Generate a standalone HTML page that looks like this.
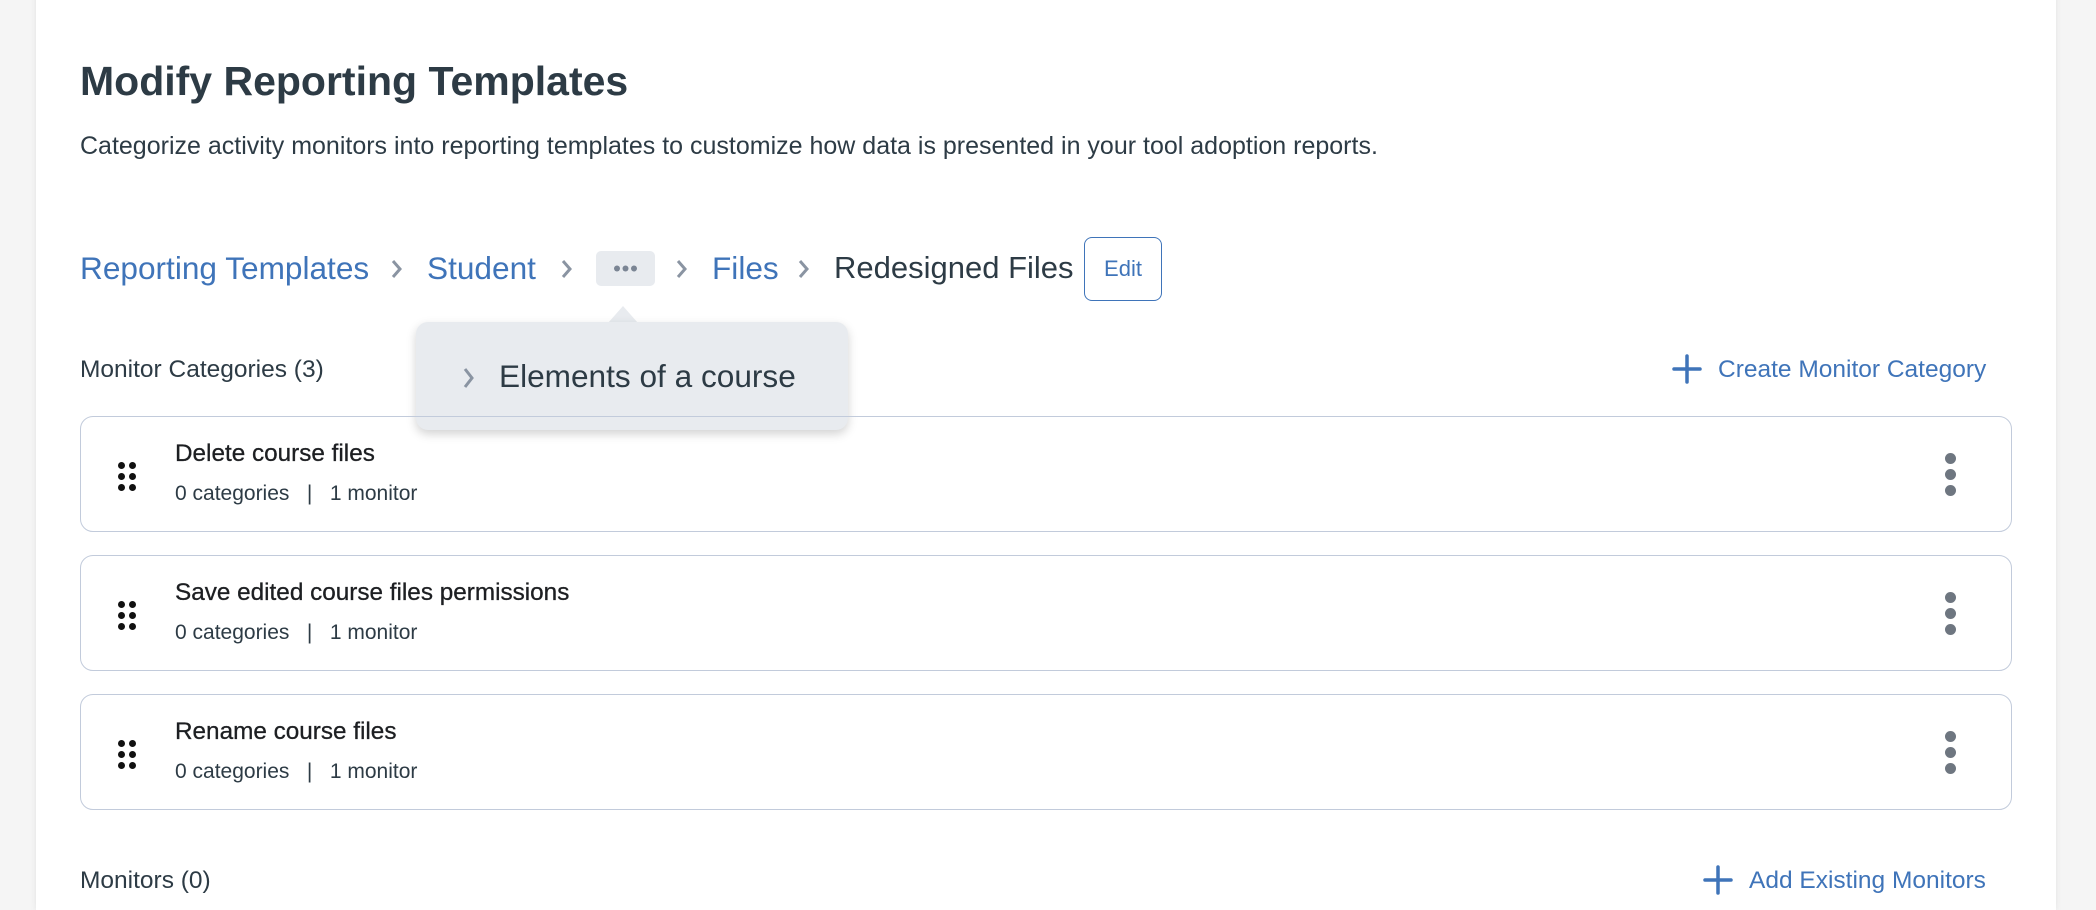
<!DOCTYPE html>
<html><head><style>
body{margin:0;width:2096px;height:896px;background:#f5f5f5;font-family:"Liberation Sans",sans-serif;overflow:hidden;position:relative}
.panel{position:absolute;left:36px;top:-10px;width:2020px;height:920px;background:#fff;box-shadow:0 0 6px rgba(0,0,0,.08)}
.a{position:absolute;white-space:nowrap}
.blue{color:#3f74b9}
.card{position:absolute;left:80px;width:1932px;height:116px;border:1.5px solid #c2cbdb;border-radius:13px;box-sizing:border-box}
.dots{position:absolute;left:37px;top:45px;width:22px;height:28px}
.dots i{position:absolute;width:7px;height:7px;border-radius:50%;background:#111}
.keb{position:absolute;left:1864px;top:36px}
.keb i{display:block;width:11px;height:11px;border-radius:50%;background:#6e7680;margin-bottom:5px}
.t{position:absolute;left:94px;top:23px;font-size:24.3px;color:#1d1f22;-webkit-text-stroke:0.3px #1d1f22}
.s{position:absolute;left:94px;top:65px;font-size:21px;color:#2d3b45}
svg.ch{position:absolute}
</style></head><body>
<div class="panel"></div>
<div class="a" style="left:80px;top:58px;font-size:41px;font-weight:bold;color:#2d3b45">Modify Reporting Templates</div>
<div class="a" style="left:80px;top:132px;font-size:25px;color:#2d3b45">Categorize activity monitors into reporting templates to customize how data is presented in your tool adoption reports.</div>
<div class="a blue" style="top:250px;font-size:31.6px;left:80px">Reporting Templates</div>
<svg class="ch" style="left:390px;top:258px" width="14" height="22"><path d="M3 3 L10 11 L3 19" stroke="#8a94a2" stroke-width="3" fill="none"/></svg>
<div class="a blue" style="left:427px;top:250px;font-size:31.6px">Student</div>
<svg class="ch" style="left:560px;top:258px" width="14" height="22"><path d="M3 3 L10 11 L3 19" stroke="#8a94a2" stroke-width="3" fill="none"/></svg>
<div class="a" style="left:596px;top:251px;width:59px;height:35px;background:#e8ebef;border-radius:5px"></div>
<svg class="a" style="left:596px;top:251px" width="59" height="35"><circle cx="21" cy="17.5" r="3" fill="#7b8594"/><circle cx="29.5" cy="17.5" r="3" fill="#7b8594"/><circle cx="38" cy="17.5" r="3" fill="#7b8594"/></svg>
<svg class="ch" style="left:675px;top:258px" width="14" height="22"><path d="M3 3 L10 11 L3 19" stroke="#8a94a2" stroke-width="3" fill="none"/></svg>
<div class="a blue" style="left:712px;top:250px;font-size:31.6px">Files</div>
<svg class="ch" style="left:797px;top:258px" width="14" height="22"><path d="M3 3 L10 11 L3 19" stroke="#8a94a2" stroke-width="3" fill="none"/></svg>
<div class="a" style="left:834px;top:250px;font-size:31px;color:#2d3b45">Redesigned Files</div>
<div class="a blue" style="left:1084px;top:237px;width:78px;height:64px;border:1.5px solid #3f74b9;border-radius:8px;box-sizing:border-box;text-align:center;line-height:61px;font-size:22px">Edit</div>
<div class="a" style="left:608px;top:306px;width:0;height:0;border-left:15px solid transparent;border-right:15px solid transparent;border-bottom:17px solid #e8ebef"></div>
<div class="a" style="left:416px;top:322px;width:432px;height:108px;background:#e8ebef;border-radius:12px;box-shadow:0 4px 10px rgba(0,0,0,.18)"></div>
<svg class="ch" style="left:462px;top:366px" width="14" height="24"><path d="M3 3 L10 12 L3 21" stroke="#8a94a2" stroke-width="3" fill="none"/></svg>
<div class="a" style="left:499px;top:358px;font-size:31.6px;color:#2d3b45">Elements of a course</div>
<div class="a" style="left:80px;top:356px;font-size:24.5px;color:#2d3b45">Monitor Categories (3)</div>
<svg class="a" style="left:1672px;top:354px" width="30" height="30"><path d="M15 2V28M2 15H28" stroke="#3f74b9" stroke-width="3.5" stroke-linecap="round"/></svg>
<div class="a blue" style="left:1718px;top:356px;font-size:24.5px">Create Monitor Category</div>
<div class="card" style="top:416px"><div class="dots"><i style="left:0;top:0"></i><i style="left:11px;top:0"></i><i style="left:0;top:11px"></i><i style="left:11px;top:11px"></i><i style="left:0;top:22px"></i><i style="left:11px;top:22px"></i></div><div class="t">Delete course files</div><div class="s">0 categories &nbsp;&nbsp;| &nbsp;&nbsp;1 monitor</div><div class="keb"><i></i><i></i><i></i></div></div>
<div class="card" style="top:555px"><div class="dots"><i style="left:0;top:0"></i><i style="left:11px;top:0"></i><i style="left:0;top:11px"></i><i style="left:11px;top:11px"></i><i style="left:0;top:22px"></i><i style="left:11px;top:22px"></i></div><div class="t">Save edited course files permissions</div><div class="s">0 categories &nbsp;&nbsp;| &nbsp;&nbsp;1 monitor</div><div class="keb"><i></i><i></i><i></i></div></div>
<div class="card" style="top:694px"><div class="dots"><i style="left:0;top:0"></i><i style="left:11px;top:0"></i><i style="left:0;top:11px"></i><i style="left:11px;top:11px"></i><i style="left:0;top:22px"></i><i style="left:11px;top:22px"></i></div><div class="t">Rename course files</div><div class="s">0 categories &nbsp;&nbsp;| &nbsp;&nbsp;1 monitor</div><div class="keb"><i></i><i></i><i></i></div></div>
<div class="a" style="left:80px;top:867px;font-size:24.5px;color:#2d3b45">Monitors (0)</div>
<svg class="a" style="left:1703px;top:865px" width="30" height="30"><path d="M15 2V28M2 15H28" stroke="#3f74b9" stroke-width="3.5" stroke-linecap="round"/></svg>
<div class="a blue" style="left:1749px;top:867px;font-size:24.5px">Add Existing Monitors</div>
</body></html>
